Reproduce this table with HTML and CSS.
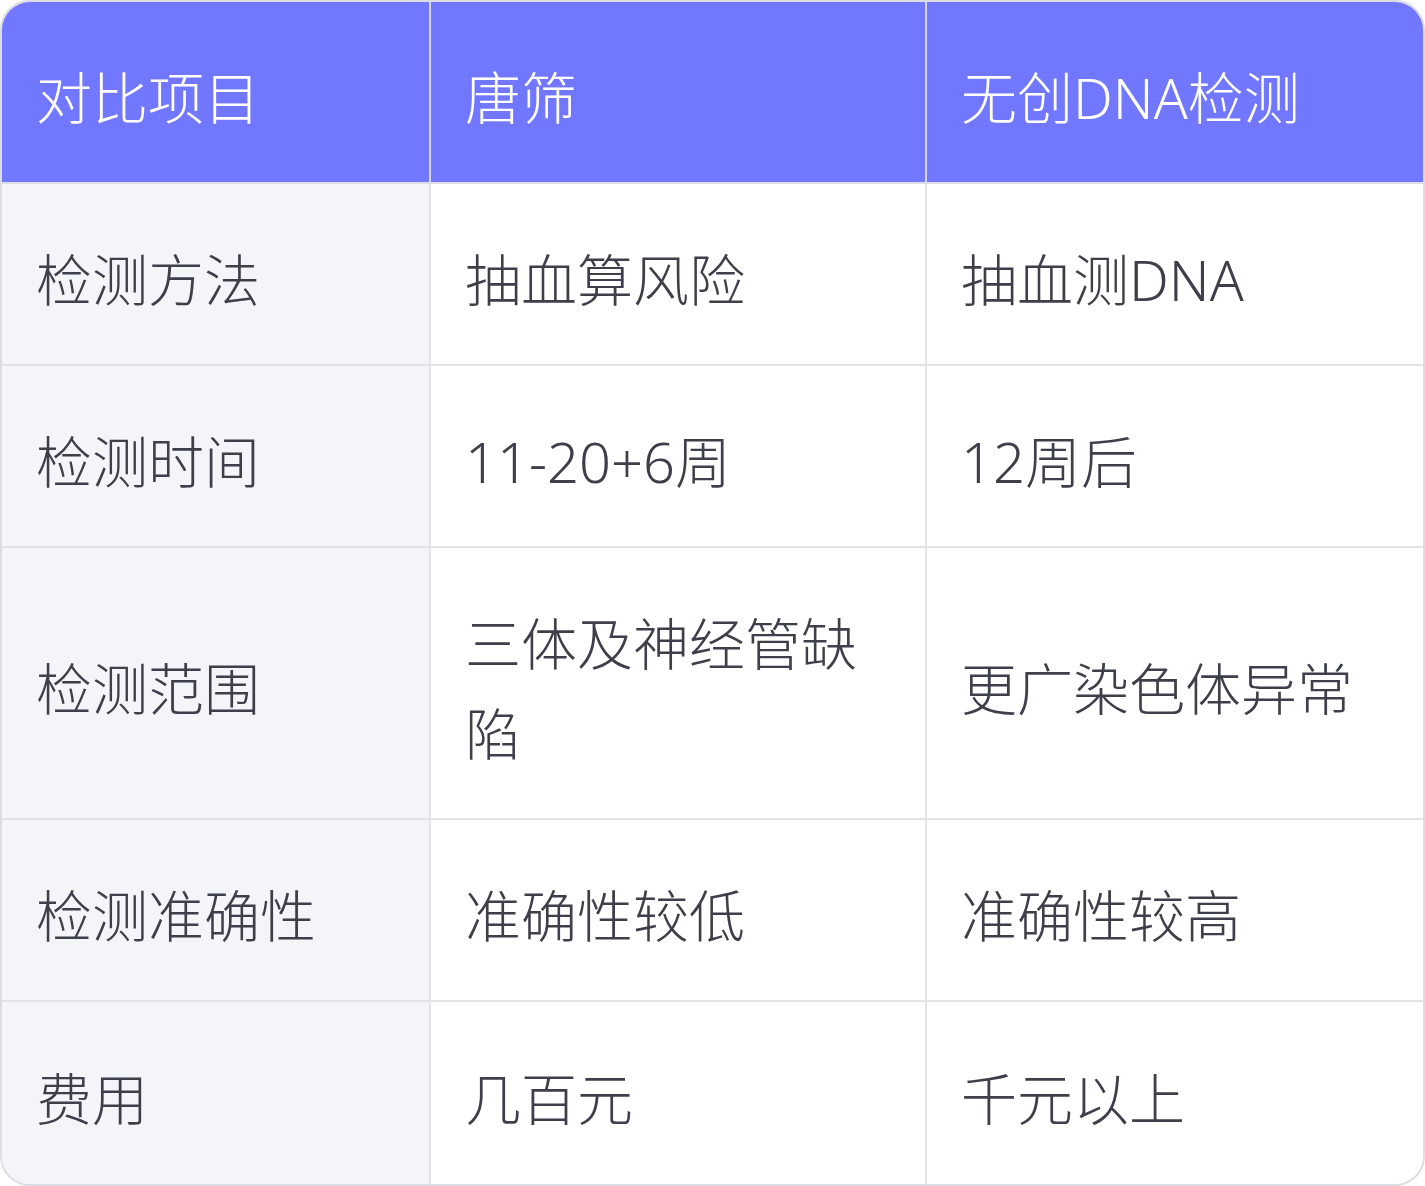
FILE: index.html
```html
<!DOCTYPE html>
<html lang="zh-CN">
<head>
<meta charset="utf-8">
<title>对比</title>
<link rel="stylesheet" href="styles.css">
</head>
<body>
<div class="table">
  <div class="cell head">对比项目</div>
  <div class="cell head">唐筛</div>
  <div class="cell head last">无创DNA检测</div>

  <div class="cell label">检测方法</div>
  <div class="cell">抽血算风险</div>
  <div class="cell last">抽血测DNA</div>

  <div class="cell label">检测时间</div>
  <div class="cell">11-20+6周</div>
  <div class="cell last">12周后</div>

  <div class="cell label">检测范围</div>
  <div class="cell">三体及神经管缺陷</div>
  <div class="cell last">更广染色体异常</div>

  <div class="cell label">检测准确性</div>
  <div class="cell">准确性较低</div>
  <div class="cell last">准确性较高</div>

  <div class="cell label bottom">费用</div>
  <div class="cell bottom">几百元</div>
  <div class="cell last bottom">千元以上</div>
</div>
</body>
</html>
```
FILE: styles.css
```css
html, body {
  margin: 0;
  padding: 0;
  background: #ffffff;
}
body {
  font-family: "Noto Sans", "Noto Sans CJK SC", sans-serif;
  font-weight: 300;
}
.table {
  width: 1425px;
  height: 1186px;
  box-sizing: border-box;
  border: 2px solid #dcdde2;
  border-radius: 30px;
  overflow: hidden;
  display: grid;
  grid-template-columns: 429px 496px 1fr;
  grid-template-rows: 182px 182px 182px 272px 182px 1fr;
}
.cell {
  box-sizing: border-box;
  border-right: 2px solid #e2e3e7;
  border-bottom: 2px solid #e2e3e7;
  padding: 50px 60px 40px 34px;
  font-size: 56px;
  line-height: 90px;
  color: #3d404a;
  display: flex;
  align-items: center;
  background: #ffffff;
}
.cell.last {
  border-right: none;
}
.cell.bottom {
  border-bottom: none;
}
.cell.head {
  background: #7177ff;
  color: #ffffff;
  border-bottom-color: #dcdde6;
  border-right-color: #d6d8ee;
}
.cell.label {
  background: #f4f5f9;
}
```
